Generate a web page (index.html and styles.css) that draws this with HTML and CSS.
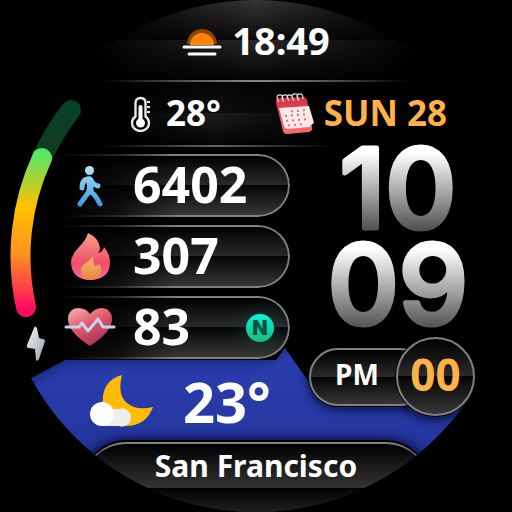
FILE: index.html
```html
<!DOCTYPE html>
<html lang="en">
<head>
<meta charset="utf-8">
<meta name="viewport" content="width=device-width, initial-scale=1">
<title>Watch face</title>
<link rel="stylesheet" href="styles.css">
</head>
<body>
<main class="face">
  <svg class="art" viewBox="0 0 512 512" role="img" aria-label="Battery level">
    <defs>
      <linearGradient id="sky" x1="0" y1="350" x2="0" y2="486" gradientUnits="userSpaceOnUse">
        <stop offset="0" stop-color="#293daf"/><stop offset=".5" stop-color="#2639a4"/><stop offset="1" stop-color="#1f2f90"/>
      </linearGradient>
      <linearGradient id="charge" x1="0" y1="150" x2="0" y2="317" gradientUnits="userSpaceOnUse">
        <stop offset="0" stop-color="#4be96c"/><stop offset=".34" stop-color="#ffc000"/><stop offset=".62" stop-color="#ff9420"/><stop offset=".95" stop-color="#ff0b62"/>
      </linearGradient>
      <linearGradient id="track" x1="0" y1="100" x2="0" y2="160" gradientUnits="userSpaceOnUse">
        <stop offset="0" stop-color="#03432a"/><stop offset="1" stop-color="#173a1c"/>
      </linearGradient>
      <linearGradient id="bolt" x1="0" y1="0" x2="1" y2="1">
        <stop offset="0" stop-color="#f4f5f8"/><stop offset="1" stop-color="#9aa0ad"/>
      </linearGradient>
      <filter id="soft" x="-10%" y="-30%" width="120%" height="160%"><feGaussianBlur stdDeviation="6"/></filter>
      <clipPath id="skyclip"><path d="M0 395L65 360H276L285 348L311 385L330 398L480 398V512H0Z"/></clipPath>
    </defs>
    <g clip-path="url(#skyclip)">
      <path d="M0 340H512V512H0Z" fill="url(#sky)"/>
      <path d="M0 391L65 356H258Q280 354 290 330" fill="none" stroke="#0b1238" stroke-width="9" opacity=".75" filter="url(#soft)"/>
      <rect x="309" y="348" width="120" height="60" rx="29" fill="#050a28" filter="url(#soft)"/>
      <circle cx="435" cy="377" r="42" fill="#050a28" filter="url(#soft)"/>
      <rect x="82" y="440" width="348" height="90" rx="42" fill="#050a28" filter="url(#soft)"/>
    </g>
    <g fill="none" stroke-width="20" stroke-linecap="round">
      <path d="M71 110A235.500 235.500 0 0 0 42 158" stroke="url(#track)"/>
      <path d="M42 158A235.500 235.500 0 0 0 26 307" stroke="url(#charge)"/>
    </g>
    <path d="M34 328L27 345Q26 348 29 348L35 349L36 360Q37 362 39 359L45 341Q45 339 42 339L39 338L37 328Q35 325 34 328Z" fill="url(#bolt)"/>
  </svg>

  <header class="band sun">
    <svg class="icon" width="40" height="28" viewBox="0 0 40 28" aria-hidden="true">
      <path d="M5 16A15 15 0 0 1 35 16Z" fill="#8a4507"/><path d="M8 17A12 12 0 0 1 32 17Z" fill="#ff8208"/>
      <path d="M2 19H38M7 26H33" stroke="#fff" stroke-width="3" stroke-linecap="round"/>
    </svg>
    <time class="suntime">18:49</time>
  </header>

  <section class="band status">
    <span class="temp">
      <svg width="24" height="36" viewBox="0 0 24 36" aria-hidden="true">
        <path d="M5.500 20.500V7Q5.500 2 10.500 2T15.500 7V20.500Q19 23 19 27A8.500 8 0 0 1 2 27Q2 23 5.500 20.500Z" fill="none" stroke="#e8e8e8" stroke-width="2.400"/>
        <path d="M10.500 11V27" stroke="#fff" stroke-width="4" stroke-linecap="round"/><circle cx="10.500" cy="27" r="4.500" fill="#fff"/>
        <path d="M17 6H20M17 11H20M17 16H20" stroke="#e8e8e8" stroke-width="2"/>
      </svg>
      <span class="reading">28°</span>
    </span>
    <span class="date">
      <svg width="42" height="42" viewBox="0 0 42 42" aria-hidden="true">
        <defs><linearGradient id="cal" x1="0" y1="0" x2="0" y2="1"><stop offset="0" stop-color="#cf3340"/><stop offset="1" stop-color="#ff6b6f"/></linearGradient></defs>
        <path d="M5 5L30 4Q32 4 33 7L38 34Q39 38 35 39L13 41Q10 41 9 38L2 10Q1 6 5 5Z" fill="url(#cal)"/>
        <path d="M5 15L35 13L40 30L37 32L36 34L13 36Q11 36 10 33Z" fill="#ffe9e9"/>
        <g fill="none" stroke="#d9cfd0" stroke-width="1.300"><path d="M5 9Q1 3 5 2T9 7M10 9Q6 3 10 2T14 7M15 8Q11 2 15 2T19 7M20 8Q16 2 20 1T24 6M25 8Q21 2 25 1T29 6"/></g>
        <g stroke="#f06a70" stroke-width="2" stroke-dasharray="2 4"><path d="M17 18.500L32 17M11 23L34 21M12 28L36 26M14 32.500L32 31"/></g>
      </svg>
      <span class="reading">SUN 28</span>
    </span>
  </section>

  <div class="body">
    <div class="left">
      <ul class="stats">
        <li class="pill">
          <svg class="stat-icon" width="52" height="50" viewBox="0 0 52 50" aria-hidden="true">
            <defs><linearGradient id="walk" x1="0" y1="4" x2="0" y2="46" gradientUnits="userSpaceOnUse"><stop offset="0" stop-color="#b9eaf2"/><stop offset="1" stop-color="#3497e2"/></linearGradient></defs>
            <circle cx="25.500" cy="9.500" r="4.500" fill="url(#walk)"/>
            <g fill="none" stroke="url(#walk)" stroke-width="5" stroke-linecap="round" stroke-linejoin="round"><path d="M25 18Q18 18 18 27M26 18Q29 24 34 25"/><path d="M24 18Q27 25 24 32L16 43M27 19V31Q31 33 36 43"/><path d="M25 18L26 31"/></g>
          </svg>
          <span class="value">6402</span>
        </li>
        <li class="pill">
          <svg class="stat-icon" width="52" height="50" viewBox="0 0 52 50" aria-hidden="true">
            <defs><linearGradient id="fire" x1="0" y1="0" x2="0" y2="1"><stop offset="0" stop-color="#f7a08e"/><stop offset=".65" stop-color="#f04d6b"/><stop offset="1" stop-color="#ef6f9c"/></linearGradient>
            <linearGradient id="ember" x1="0" y1="0" x2="0" y2="1"><stop offset="0" stop-color="#f6bd6b"/><stop offset="1" stop-color="#ee8340"/></linearGradient></defs>
            <path d="M24 1Q35 6 36 16Q36 19 34 21Q39 20 40 15Q46 22 46 30Q46 47 27 48Q8 48 7 31Q7 23 15 15Q22 8 24 1Z" fill="url(#fire)"/>
            <path d="M29 23Q29 31 31 34Q34 34 35 32Q38 36 37 41Q35 48 27 48Q17 48 17 39Q17 33 23 30Q28 27 29 23Z" fill="url(#ember)"/>
          </svg>
          <span class="value">307</span>
        </li>
        <li class="pill">
          <svg class="stat-icon" width="52" height="50" viewBox="0 0 52 50" aria-hidden="true">
            <defs><linearGradient id="heart" x1="0" y1="0" x2=".6" y2="1"><stop offset="0" stop-color="#f6b6b0"/><stop offset=".5" stop-color="#e45a6b"/><stop offset="1" stop-color="#a03458"/></linearGradient></defs>
            <path d="M26 43Q4 29 4 16Q4 6 14 5Q22 5 26 11Q31 5 38 5Q48 6 48 16Q48 29 26 43Z" fill="url(#heart)"/>
            <path d="M2 24H15L18 20L24 28L34 16L39 24H50" fill="none" stroke="#c5d2f2" stroke-width="3" stroke-linecap="round" stroke-linejoin="round"/>
          </svg>
          <span class="value">83</span>
          <span class="badge">N</span>
        </li>
      </ul>
      <section class="weather">
        <svg width="66" height="54" viewBox="0 0 66 54" aria-hidden="true">
          <path d="M33 1Q28 21 38 29Q47 37 64 33Q57 52 37 52Q18 50 14 33Q11 7 33 1Z" fill="#ffbb05"/>
          <path d="M30 35A9 9 0 1 1 30 52H13V35Z" fill="#eee"/><circle cx="13" cy="40" r="12" fill="#fff"/>
        </svg>
        <span class="outside">23°</span>
      </section>
    </div>

    <section class="clock">
      <svg class="digits" viewBox="0 0 160 190" role="img" aria-label="10:09">
        <defs>
          <linearGradient id="h" x1="0" y1="2" x2="0" y2="86" gradientUnits="userSpaceOnUse"><stop offset=".05" stop-color="#fff"/><stop offset="1" stop-color="#4a4a4a"/></linearGradient>
          <linearGradient id="m" x1="0" y1="98" x2="0" y2="182" gradientUnits="userSpaceOnUse"><stop offset=".05" stop-color="#fff"/><stop offset="1" stop-color="#505050"/></linearGradient>
        </defs>
        <text x="80" y="81" fill="url(#h)" stroke="url(#h)">10</text>
        <text x="80" y="177" fill="url(#m)" stroke="url(#m)">09</text>
      </svg>
      <div class="meta"><span class="period">PM</span><span class="seconds">00</span></div>
    </section>
  </div>

  <footer class="place"><span>San Francisco</span></footer>
</main>
</body>
</html>
```
FILE: styles.css
```css
* { box-sizing: border-box; }
body {
  margin: 0;
  background: #000;
  color: #fff;
  font-family: "Noto Sans", sans-serif;
  font-weight: 700;
}
.face {
  position: relative;
  display: flex;
  flex-direction: column;
  width: 100%;
  max-width: 512px;
  min-height: 512px;
  margin: 0 auto;
  overflow: hidden;
  background: #000;
  clip-path: circle(50%);
}
.art { position: absolute; inset: 0; width: 100%; height: 100%; }

.band {
  display: flex;
  align-items: center;
  border-bottom: 2px solid;
}
.sun {
  height: 82px;
  justify-content: center;
  gap: 10px;
  padding-top: 4px;
  background:
    linear-gradient(90deg, #000 18%, transparent 50%, #000 82%),
    linear-gradient(#363636, #0a0a0a 40px, #282828 40px, #050505 78px);
  border-image: linear-gradient(90deg, transparent 22%, #888 50%, transparent 78%) 1;
}
.suntime { margin-bottom: 4px; font-size: 38px; line-height: 40px; }
.status {
  height: 65px;
  padding: 0 65px 0 130px;
  justify-content: space-between;
  background:
    linear-gradient(90deg, #000 24%, transparent 42%, #000 64%),
    linear-gradient(#050505, #0e0e0e 31px, #1e1e1e 31px, #040404);
  border-image: linear-gradient(90deg, transparent 20%, #666 42%, transparent 65%) 1;
}
.temp, .date { display: flex; align-items: center; font-size: 35px; line-height: 40px; }
.reading { margin-bottom: 2px; }
.temp { gap: 12px; }
.date { gap: 8px; color: #ffb14a; }

.body {
  position: relative;
  display: grid;
  grid-template-columns: 290px 1fr;
}
.left { padding: 7px 0 0 60px; }
.stats { display: grid; gap: 8px; margin: 0; padding: 0; list-style: none; }
.pill {
  position: relative;
  display: flex;
  align-items: center;
  height: 63px;
  padding-left: 4px;
}
.pill::before {
  content: "";
  position: absolute;
  inset: 0;
  border: 2px solid #808080;
  border-left: 0;
  border-radius: 0 32px 32px 0;
  background: linear-gradient(#000, #2b2b2b 50%, #050505 50%, #373737);
  mask-image: linear-gradient(90deg, transparent, rgb(0 0 0 / 30%) 25%, #000 50%);
}
.stat-icon, .value, .badge { position: relative; }
.value { margin: 0 0 4px 17px; font-size: 50px; line-height: 56px; }
.badge {
  width: 28px;
  height: 28px;
  margin: 0 16px 0 auto;
  border-radius: 50%;
  background: linear-gradient(#08f5d8, #16bd7c);
  box-shadow: 0 0 22px rgb(0 190 170 / 25%);
  color: #06543f;
  font: 900 20px/28px Inter, sans-serif;
  text-align: center;
}
.weather {
  display: flex;
  align-items: center;
  gap: 28px;
  height: 83px;
  padding: 1px 0 0 29px;
}
.outside { font-size: 56px; line-height: 60px; }

.clock { display: flex; flex-direction: column; align-items: center; padding-right: 6px; }
.digits { width: 160px; height: 190px; overflow: visible; }
.digits text {
  font: 500 110px Inter, sans-serif;
  text-anchor: middle;
  stroke-width: 5px;
  stroke-linejoin: round;
}
.meta { display: flex; align-items: center; align-self: flex-start; margin-left: 19px; }
.period, .seconds {
  border: 2px solid #808080;
  background: linear-gradient(#000, #2b2b2b 50%, #050505 50%, #373737);
  box-shadow: 0 0 0 1px #000;
}
.period {
  width: 120px;
  height: 58px;
  padding-left: 24px;
  border-radius: 29px;
  font-size: 28px;
  line-height: 48px;
}
.seconds {
  width: 79px;
  height: 79px;
  margin-left: -33px;
  border-radius: 50%;
  color: #ffb14a;
  font-size: 44px;
  line-height: 70px;
  text-align: center;
}
.place {
  position: relative;
  flex: 1;
  display: flex;
  flex-direction: column;
  background: linear-gradient(#000, #202020) bottom / 100% 26px no-repeat;
}
.place span {
  margin: 0 84px;
  height: 46px;
  border-top: 2px solid #808080;
  border-radius: 42px 42px 0 0;
  background: linear-gradient(#000, #343434);
  box-shadow: 0 -1px 0 1px #000;
  font-size: 30px;
  line-height: 44px;
  text-align: center;
}
```
